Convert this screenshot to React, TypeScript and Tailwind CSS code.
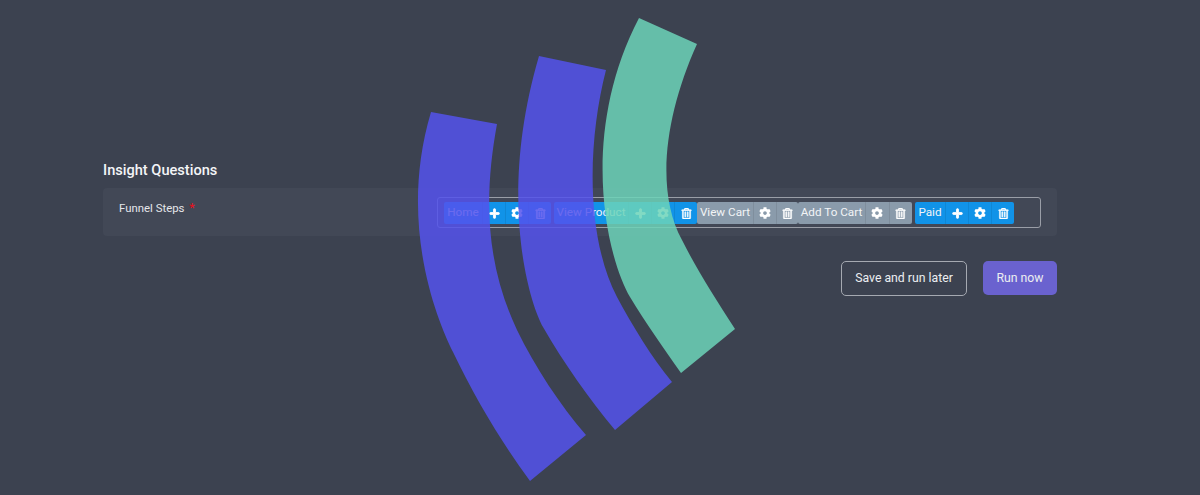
import React from 'react';
import { FaPlus, FaCog, FaRegTrashAlt } from 'react-icons/fa';

const steps = [
  { name: 'Home', add: true, active: true, box: 'w-[107px] mr-[3px]', label: 'w-[38px]' },
  { name: 'View Product', add: true, active: true, box: 'w-[143px]', label: 'w-[74px]' },
  { name: 'View Cart', add: false, active: false, box: 'w-[101px]', label: 'w-[56px]' },
  { name: 'Add To Cart', add: false, active: false, box: 'w-[114px]', label: 'w-[67px]' },
  { name: 'Paid', add: true, active: true, box: 'w-[99px] ml-[3px]', label: 'w-[30px]' },
];

function Step({ name, add, active, box, label }: { name: string; add: boolean; active: boolean; box: string; label: string }) {
  const color = active ? 'bg-[#1193e8]' : 'bg-[#8a9bab]';
  const btn = 'flex flex-1 items-center justify-center border-l border-[#00000014]';
  return (
    <div className={`flex h-[22px] shrink-0 rounded-[2px] overflow-hidden text-[11.7px] text-[#f2f4f6] ${color} ${box}`}>
      <span className={`flex items-center justify-center whitespace-nowrap ${label}`}>{name}</span>
      {add && (
        <span className={btn}>
          <FaPlus size={11} color="#fff" stroke="#fff" strokeWidth={40} />
        </span>
      )}
      <span className={btn}>
        <FaCog size={12} color="#fff" />
      </span>
      <span className={btn}>
        <FaRegTrashAlt size={11} color="#fff" stroke="#fff" strokeWidth={25} />
      </span>
    </div>
  );
}

function Arcs() {
  return (
    <svg className="absolute left-0 top-0 pointer-events-none" width="1200" height="495" viewBox="0 0 1200 495">
      <path
        d="M431 112 L497 124 C484 195 485 262 517 330 C535 367 560 405 586 435 L530 481 C502 443 476 400 453 352 C436 318 398 222 431 112 Z"
        fill="#5352ec"
        fillOpacity="0.85"
      />
      <path
        d="M539 56 L606 70 C588 140 585 235 617 297 C632 325 652 358 672 382 L615 430 C590 400 563 362 543 327 C528 300 498 195 539 56 Z"
        fill="#5352ec"
        fillOpacity="0.85"
      />
      <path
        d="M639 18 L697 44 C665 115 655 190 682 240 C697 270 715 298 735 329 L681 373 C665 350 645 322 630 297 C607 258 578 135 639 18 Z"
        fill="#6cd4b8"
        fillOpacity="0.85"
      />
    </svg>
  );
}

export default function App() {
  return (
    <div className="relative w-[1200px] h-[495px] overflow-hidden bg-[#3c4250] font-['Roboto',sans-serif]">
      <div className="pl-[103px] pr-[143px] pt-[161px]">
        <h2 className="text-[14.6px] leading-[18px] font-medium text-[#f4f5f7]">Insight Questions</h2>
        <div className="flex mt-[9px] h-[48px] rounded-[4px] bg-[#424856] px-[16px]">
          <div className="w-[318px] pt-[12px] text-[11.4px] leading-[16px] text-[#e4e6ea]">
            Funnel Steps <span className="text-[#e8101c] text-[13px] ml-[2px]">*</span>
          </div>
          <div className="flex items-center self-center w-[604px] h-[31px] rounded-[3px] border-[1.5px] border-[#9a9ea7] pl-[6px] pt-[2px]">
            {steps.map((s) => (
              <Step key={s.name} {...s} />
            ))}
          </div>
        </div>
        <div className="flex justify-end gap-[16px] mt-[25px]">
          <button className="h-[35px] w-[126px] rounded-[5px] border-[1.5px] border-[#a5a9b1] text-[12.25px] text-[#eceef1]">
            Save and run later
          </button>
          <button className="h-[34px] w-[74px] rounded-[5px] bg-[#6a62cf] text-[12.25px] text-[#eceef1]">Run now</button>
        </div>
      </div>
      <Arcs />
    </div>
  );
}
